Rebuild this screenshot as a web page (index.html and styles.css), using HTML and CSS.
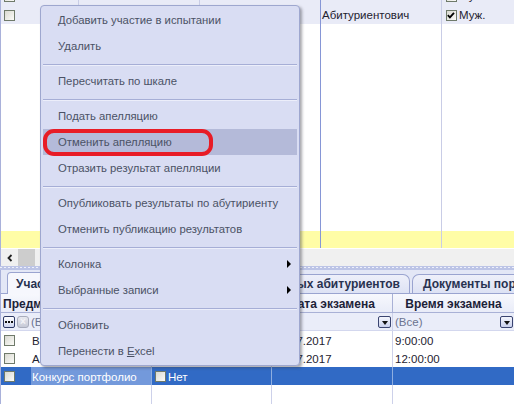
FILE: index.html
```html
<!DOCTYPE html>
<html lang="ru">
<head>
<meta charset="utf-8">
<title>Участие в испытаниях</title>
<link rel="stylesheet" href="styles.css">
</head>
<body>
<div class="app">
  <div class="master">
    <div class="mrow r1">
      <div class="c c-cb"><span class="cb"></span></div>
      <div class="c c-num">11</div>
      <div class="c c-fam">Маин</div>
      <div class="c c-name">Ени</div>
      <div class="c c-pat"></div>
      <div class="c c-sex"><span class="cb checked"><svg viewBox="0 0 11 11" width="11" height="11"><path d="M2 5.2 L4.3 7.6 L8.8 2.6" fill="none" stroke="#000" stroke-width="2"/></svg></span>Муж.</div>
    </div>
    <div class="mrow r2">
      <div class="c c-cb"><span class="cb"></span></div>
      <div class="c c-num"></div>
      <div class="c c-fam"></div>
      <div class="c c-name"></div>
      <div class="c c-pat">Абитуриентович</div>
      <div class="c c-sex"><span class="cb checked"><svg viewBox="0 0 11 11" width="11" height="11"><path d="M2 5.2 L4.3 7.6 L8.8 2.6" fill="none" stroke="#000" stroke-width="2"/></svg></span>Муж.</div>
    </div>
    <div class="mfill"></div>
    <div class="mrow total">
      <div class="c c-cb"></div>
      <div class="c c-num"></div>
      <div class="c c-fam"></div>
      <div class="c c-name"></div>
      <div class="c c-pat"></div>
      <div class="c c-sex"></div>
    </div>
    <div class="hscroll">
      <div class="sbtn"><svg viewBox="0 0 8 8" width="8" height="8"><path d="M5.5 1 L2.5 4 L5.5 7" fill="none" stroke="#222" stroke-width="1.8"/></svg></div>
      <div class="thumb"></div>
      <div class="track"></div>
    </div>
  </div>
  <div class="splitter"></div>
  <div class="detail">
    <div class="tabs">
      <div class="tab tab1">Участие в испытаниях</div>
      <div class="tab tab2">Испытания выбранных абитуриентов</div>
      <div class="tab tab3">Документы портфолио</div>
    </div>
    <div class="drow head">
      <div class="d d-first">Предмет</div>
      <div class="d d-flag"></div>
      <div class="d d-date hc">Дата экзамена</div>
      <div class="d d-time hc">Время экзамена</div>
    </div>
    <div class="drow filter">
      <div class="d d-first"><span class="fbtn dots"><i></i><i></i><i></i></span><span class="fbtn clr">×</span><span class="ftxt">(Все)</span></div>
      <div class="d d-flag"><span class="ftxt"></span><span class="dd"></span></div>
      <div class="d d-date"><span class="ftxt"></span><span class="dd"></span></div>
      <div class="d d-time"><span class="ftxt">(Все)</span><span class="dd"></span></div>
    </div>
    <div class="drow">
      <div class="d d-cb"><span class="cb"></span></div>
      <div class="d d-subj">Выпускной экзамен</div>
      <div class="d d-flag"></div>
      <div class="d d-date">10.07.2017</div>
      <div class="d d-time">9:00:00</div>
    </div>
    <div class="drow">
      <div class="d d-cb"><span class="cb"></span></div>
      <div class="d d-subj">Английский язык</div>
      <div class="d d-flag"></div>
      <div class="d d-date">12.07.2017</div>
      <div class="d d-time">12:00:00</div>
    </div>
    <div class="drow sel">
      <div class="d d-cb"><span class="cb"></span></div>
      <div class="d d-subj focus">Конкурс портфолио</div>
      <div class="d d-flag"><span class="cb"></span>Нет</div>
      <div class="d d-date"></div>
      <div class="d d-time"></div>
    </div>
    <div class="drow empty">
      <div class="d d-cb"></div>
      <div class="d d-subj"></div>
      <div class="d d-flag"></div>
      <div class="d d-date"></div>
      <div class="d d-time"></div>
    </div>
  </div>
</div>

<div class="menu">
  <div class="mi">Добавить участие в испытании</div>
  <div class="mi">Удалить</div>
  <div class="sep"></div>
  <div class="mi">Пересчитать по шкале</div>
  <div class="sep"></div>
  <div class="mi">Подать апелляцию</div>
  <div class="mi hot">Отменить апелляцию</div>
  <div class="mi">Отразить результат апелляции</div>
  <div class="sep"></div>
  <div class="mi">Опубликовать результаты по абутириенту</div>
  <div class="mi">Отменить публикацию результатов</div>
  <div class="sep"></div>
  <div class="mi"><span>Колонка</span><span class="arrow"></span></div>
  <div class="mi"><span>Выбранные записи</span><span class="arrow"></span></div>
  <div class="sep"></div>
  <div class="mi">Обновить</div>
  <div class="mi"><span>Перенести в <u>E</u>xcel</span></div>
</div>
<div class="callout"></div>
</body>
</html>
```

FILE: styles.css
```css
* { box-sizing: border-box; margin: 0; padding: 0; }
html, body { width: 514px; height: 404px; overflow: hidden; }
body {
  font-family: "Liberation Sans", Arial, sans-serif;
  font-size: 11.5px;
  color: #1e2230;
  background: #fff;
  position: relative;
}
.app { display: flex; flex-direction: column; height: 404px; }

/* ---------- master grid ---------- */
.master {
  height: 266px;
  flex: none;
  display: flex;
  flex-direction: column;
  border-left: 1px solid #a9b1da;
  overflow: hidden;
  background: #fff;
}
.mrow { display: flex; height: 19px; flex: none; }
.r1 { margin-top: -14px; background: #e9ebf7; }
.r2 { background: #e9ebf7; }
.c {
  display: flex;
  align-items: center;
  border-right: 1px solid #c9cde6;
  white-space: nowrap;
  overflow: hidden;
  padding-top: 1px;
}
.c-cb { width: 40px; padding-left: 3px; border-right: none; }
.c-num { width: 38px; justify-content: flex-end; padding-right: 11px; }
.c-fam { width: 121px; padding-left: 1px; }
.c-name { width: 121px; padding-left: 3px; border-right-color: #8696d6; }
.c-pat { width: 121px; padding-left: 1px; }
.c-sex { flex: 1; padding-left: 4px; border-right: none; }
.c-sex .cb { margin-right: 2px; }
.mfill {
  flex: 1;
  background:
    linear-gradient(to right,
      transparent 319px, #8696d6 319px, #8696d6 320px, transparent 320px,
      transparent 440px, #c9cde6 440px, #c9cde6 441px, transparent 441px);
}
.total { height: 18px; background: #fffda6; border-bottom: 1px solid #fff; }
.hscroll { height: 17px; flex: none; display: flex; background: #f0f0f0; }
.sbtn { width: 17px; display: flex; align-items: center; justify-content: center; }
.thumb { width: 17px; background: #cdcdcd; }
.track { flex: 1; }

.splitter {
  height: 4px;
  flex: none;
  background-color: #bcc4e6;
  background-image: radial-gradient(circle at 1px 1.5px, #eef0fb 0.9px, transparent 1px);
  background-size: 4px 4px;
}

/* ---------- detail ---------- */
.detail {
  flex: 1;
  display: flex;
  flex-direction: column;
  border-left: 1px solid #a9b1da;
  background: #fff;
  overflow: hidden;
}
.tabs {
  height: 24px;
  flex: none;
  display: flex;
  align-items: flex-end;
  background: #e3e7f6;
  padding-left: 6px;
  border-bottom: 1px solid #9aa4d0;
  white-space: nowrap;
}
.tab {
  font-weight: bold;
  font-size: 12px;
  color: #283250;
  display: flex;
  align-items: center;
  border: 1px solid #9aa4d0;
  border-bottom: none;
  overflow: hidden;
  flex: none;
}
.tab1 {
  width: 145px;
  height: 22px;
  margin-bottom: -1px;
  padding-left: 8px;
  background: #f6f7fd;
  border-radius: 4px 4px 0 0;
}
.tab2 {
  width: 258px;
  height: 19px;
  justify-content: flex-end;
  padding-right: 9px;
  background: linear-gradient(#eef0fa, #dde2f4);
  border-radius: 0 7px 0 0;
}
.tab3 {
  flex: 1;
  height: 19px;
  margin-left: 2px;
  padding-left: 10px;
  background: linear-gradient(#eef0fa, #dde2f4);
  border-right: none;
  border-radius: 7px 0 0 0;
}

.drow { display: flex; height: 18px; flex: none; }
.d {
  display: flex;
  align-items: center;
  border-right: 1px solid #cdd1ea;
  white-space: nowrap;
  overflow: hidden;
  padding-top: 1px;
}
.d-cb { width: 30px; padding-left: 3px; border-right: none; }
.d-subj { width: 121px; padding-left: 1px; }
.d-first { width: 151px; padding-left: 2px; }
.d-flag { width: 120px; padding-left: 3px; }
.d-flag .cb { margin-right: 2px; }
.d-date { width: 121px; padding-left: 2px; }
.d-time { flex: 1; padding-left: 2px; border-right: none; }

.head {
  height: 19px;
  background: linear-gradient(#f7f8fd, #e9ecf8);
  border-bottom: 1px solid #a9b1d6;
  font-weight: bold;
  font-size: 12px;
  color: #1c2238;
}
.head .d { border-right-color: #a9b1d6; }
.head .hc { justify-content: center; padding-left: 0; }
.filter { background: #eaedf9; border-bottom: 1px solid #d3d7ee; }
.filter .d { justify-content: space-between; padding-right: 1px; }
.filter .d-first { justify-content: flex-start; padding-left: 2px; }
.ftxt { color: #6c7490; }
.fbtn {
  width: 12px;
  height: 12px;
  border-radius: 2px;
  display: flex;
  align-items: center;
  justify-content: center;
  margin-right: 2px;
}
.dots { border: 1px solid #2e3a66; background: linear-gradient(#ffffff, #cfd6f0); gap: 1px; }
.dots i { width: 2px; height: 2px; background: #111; display: block; }
.clr {
  border: 1px solid #a8acbc;
  background: linear-gradient(#e8e9ef, #c6c9d6);
  color: #f4f4f8;
  font-size: 10px;
  font-weight: bold;
  line-height: 1;
  border-radius: 3px;
}
.dd {
  width: 13px;
  height: 12px;
  border: 1px solid #3a4470;
  border-radius: 2px;
  background: linear-gradient(#f4f6fd, #c9d0ec);
  display: flex;
  align-items: center;
  justify-content: center;
  flex: none;
}
.dd::after {
  content: "";
  border-top: 4px solid #111;
  border-left: 3.5px solid transparent;
  border-right: 3.5px solid transparent;
  margin-top: 1px;
}
.sel { background: #316ac5; color: #fff; }
.sel .d { border-right-color: #8eaee0; }
.sel .focus { background: #7399db; }
.empty { flex: 1; }

/* checkbox */
.cb {
  width: 11px;
  height: 11px;
  flex: none;
  border: 1px solid #6f7a6a;
  background: linear-gradient(135deg, #d9d9d1, #fbfbf8);
  display: inline-flex;
}
.cb svg { display: block; margin: -1px 0 0 -1px; }

/* ---------- context menu ---------- */
.menu {
  position: absolute;
  left: 40px;
  top: 5px;
  width: 260px;
  height: 361px;
  padding: 1px;
  border: 1px solid #9ea7cf;
  border-radius: 4px;
  background: #d9ddf3;
  box-shadow: 2px 2px 3px rgba(60, 60, 70, 0.45);
  color: #4b5265;
  font-size: 11.3px;
}
.mi {
  height: 26px;
  margin: 0 1px;
  padding-left: 15px;
  display: flex;
  align-items: center;
  white-space: nowrap;
}
.mi.hot { background: #b4bad9; }
.arrow {
  margin-left: auto;
  margin-right: 6px;
  border-left: 4px solid #000;
  border-top: 4px solid transparent;
  border-bottom: 4px solid transparent;
}
.sep { height: 9px; margin: 0 1px; padding-top: 5px; }
.sep::before {
  content: "";
  display: block;
  height: 1px;
  background: #a6aed6;
  box-shadow: 0 1px 0 #eceefa;
}
.callout {
  position: absolute;
  left: 43px;
  top: 129px;
  width: 170px;
  height: 27px;
  border: 4px solid #e81c26;
  border-radius: 11px;
}
```
